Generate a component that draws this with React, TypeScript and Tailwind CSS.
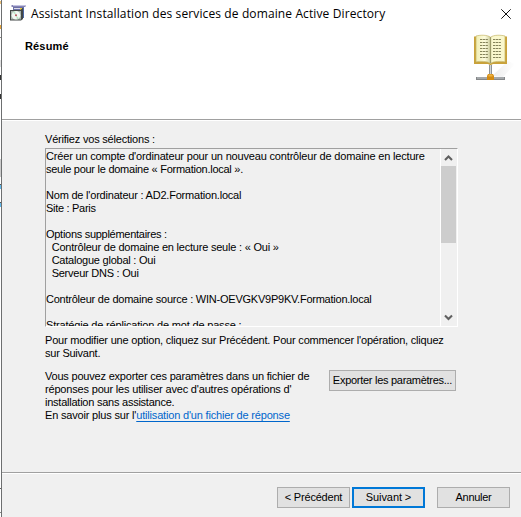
import React from "react";

const sans = "font-['Liberation_Sans',Arial,sans-serif]";

function InstallerIcon() {
  return (
    <svg width="17" height="16" viewBox="0 0 17 16" className="shrink-0">
      <path d="M1.500 0h14v2h-14z" fill="#8583b4" />
      <path d="M3 .5h12" stroke="#c4c4e2" />
      <path d="M3 2h11v5H3z" fill="#6c70a6" />
      <path d="M4 3h6v1H4z" fill="#dedcea" />
      <path d="M10 3h2.500v10H10z" fill="#f5d03f" />
      <path d="M12 3h2v10h-2z" fill="#4967a5" />
      <path d="M0 5h10l3-2v11l-2 1.500H0z" fill="#434746" />
      <path d="M1 6h10v8.500H1z" fill="#a8b5ae" />
      <circle cx="6" cy="10.300" r="4.300" fill="#f0f6f2" />
      <path d="M6 10.300 3 7.400l2-1.200zM6 10.300l3 3-2 1.200z" fill="#b9e5c3" />
      <circle cx="6" cy="10.300" r="1" fill="#b24d55" />
    </svg>
  );
}

function DirectoryIcon() {
  return (
    <svg width="42" height="48" viewBox="0 0 42 48">
      <defs>
        <linearGradient id="page" x1="0" x2="1">
          <stop offset="0" stopColor="#f0eeb4" />
          <stop offset=".6" stopColor="#fcfbdc" />
          <stop offset="1" stopColor="#cfd0a0" />
        </linearGradient>
        <linearGradient id="shade" x1="0" x2="1">
          <stop offset="0" stopColor="#d8d8d8" />
          <stop offset="1" stopColor="#ffffff" />
        </linearGradient>
      </defs>
      <path d="M18 42 34 27l7 3-12 13z" fill="url(#shade)" opacity=".5" />
      <path d="M0 2.500h2v25h11l3.500 2 3.500-2h11v-25h2V30H19l-2.500 1.200L14 30H0z" fill="#c9a23a" />
      <path d="M2 2C7 .8 13 .8 16.500 3.200v26C12.500 27.200 7 27 2 27.800z" fill="url(#page)" stroke="#c4b566" strokeWidth=".7" />
      <path d="M31 2C26 .8 20 .8 16.500 3.200v26c4-2 9.500-2.200 14.500-1.400z" fill="#faf8cd" stroke="#c4b566" strokeWidth=".7" />
      <path d="M16.500 3.200v26" stroke="#9b9a68" strokeWidth="1.300" />
      <g stroke="#85845b" strokeWidth="1" strokeDasharray="2.300 .5">
        <path d="M6 5.500h8M6 8.500h8M6 11.500h8M6 14.500h8M6 17.500h8M6 20.500h8M6 23.500h8" />
        <path d="M19 5.500h8M19 8.500h8M19 11.500h8M19 14.500h8M19 17.500h8M19 20.500h8M19 23.500h8" />
      </g>
      <path d="M15 31h3v9h-3z" fill="#8d9398" />
      <path d="M16 31h1v9h-1z" fill="#d1d5d7" />
      <path d="M2 43h29v3H2z" fill="#858789" />
      <path d="M3 44h27" stroke="#c4c9cc" />
      <path d="M14 40h5l1 2v4h-7v-4z" fill="#d38b14" />
      <path d="M14.500 40.500h4v2h-4z" fill="#edb342" />
    </svg>
  );
}

function Line({ children = "\u00a0", className = "" }: { children?: React.ReactNode; className?: string }) {
  return <div className={`h-[13px] whitespace-pre ${className}`}><span>{children}</span></div>;
}

function Button({ children, className = "" }: { children: React.ReactNode; className?: string }) {
  return (
    <button className={`flex h-[21px] shrink-0 items-center justify-center whitespace-pre bg-[#e1e1e1] leading-[13px] ${className}`}>
      {children}
    </button>
  );
}

function Arrow({ down = false }: { down?: boolean }) {
  return (
    <svg width="15" height="17" viewBox="0 0 15 17">
      <path d={down ? "M4 6.500 7.500 10 11 6.500" : "M4 11 7.500 7.500 11 11"} fill="none" stroke="#606060" strokeWidth="2.100" />
    </svg>
  );
}

export default function App() {
  return (
    <div className={`flex h-[517px] w-[521px] overflow-hidden bg-[#f0f0f0] text-[11px] leading-[13px] text-black ${sans}`}>
      <div className="flex w-px shrink-0 flex-col bg-white">
        <div className="mt-[1px] h-[3px] bg-[#eabf75]" />
        <div className="mt-[21px] h-[4px] bg-[#e4a33b]" />
        <div className="mt-[8px] h-px bg-[#888]" />
        <div className="mt-[22px] h-[7px] bg-[#e0e0e0]" />
        <div className="mt-[8px] h-[5px] bg-[#333]" />
        <div className="mt-[14px] h-[5px] bg-[#333]" />
        <div className="mt-[60px] h-[18px] bg-[#ccc]" />
        <div className="mt-[7px] h-px bg-[#555]" />
        <div className="h-[4px] bg-[#61b9ec]" />
        <div className="mt-[13px] h-px bg-[#555]" />
        <div className="h-[4px] bg-[#61b9ec]" />
        <div className="mt-[281px] h-px bg-[#666]" />
        <div className="mt-[23px] h-px bg-[#888]" />
      </div>
      <div className="w-px shrink-0 bg-[#6d6f70]" />
      <main className="flex w-[519px] shrink-0 flex-col">
        <header className="h-[119px] bg-white">
          <div className="flex h-[28px] items-center pl-2">
            <div className="mt-[-2px]"><InstallerIcon /></div>
            <h1 className="ml-1 whitespace-pre font-['Open_Sans',sans-serif] text-[12px] leading-[18px] tracking-[0.115px]">Assistant Installation des services de domaine Active Directory</h1>
            <svg className="ml-auto mr-[10px]" width="10" height="10" viewBox="0 0 10 10">
              <path d="m.3.3 9.400 9.400m0-9.400L.3 9.700" stroke="#111" />
            </svg>
          </div>
          <div className="flex justify-between pl-[23px] pr-[5px]">
            <h2 className="mt-[12px] text-[11px] font-bold leading-[13px] tracking-[0.15px]">Résumé</h2>
            <div className="mt-[6px]"><DirectoryIcon /></div>
          </div>
        </header>
        <div className="h-[2px] shrink-0 border-b border-white bg-[#a0a0a0]" />
        <section className="h-[351px] shrink-0 pl-[43px] pt-[12px]">
          <Line className="tracking-[-0.2px]">Vérifiez vos sélections :</Line>
          <div className="mt-[2px] flex h-[179px] w-[413px] overflow-hidden border border-b-white border-l-[#a0a0a0] border-r-white border-t-[#a0a0a0]">
            <div className="h-[177px] flex-1 overflow-hidden pt-px">
              <Line className="tracking-[-0.175px]">Créer un compte d'ordinateur pour un nouveau contrôleur de domaine en lecture</Line>
              <Line className="tracking-[-0.26px]">seule pour le domaine « Formation.local ».</Line>
              <Line />
              <Line className="tracking-[-0.21px]">Nom de l'ordinateur : AD2.Formation.local</Line>
              <Line className="tracking-[-0.3px]">Site : Paris</Line>
              <Line />
              <Line className="tracking-[-0.28px]">Options supplémentaires :</Line>
              <Line className="tracking-[-0.215px]">{"  Contrôleur de domaine en lecture seule : « Oui »"}</Line>
              <Line className="tracking-[-0.23px]">{"  Catalogue global : Oui"}</Line>
              <Line className="tracking-[-0.24px]">{"  Serveur DNS : Oui"}</Line>
              <Line />
              <Line className="tracking-[-0.235px]">Contrôleur de domaine source : WIN-OEVGKV9P9KV.Formation.local</Line>
              <Line />
              <Line className="tracking-[-0.18px]">Stratégie de réplication de mot de passe :</Line>
            </div>
            <div className="flex w-[17px] flex-col border-x border-l-white border-r-[#f0f0f0]">
              <Arrow />
              <div className="h-[77px] bg-[#cdcdcd]" />
              <div className="mt-auto"><Arrow down /></div>
            </div>
          </div>
          <div className="mt-[7px]">
            <Line className="tracking-[-0.2px]">Pour modifier une option, cliquez sur Précédent. Pour commencer l'opération, cliquez</Line>
            <Line className="tracking-[-0.24px]">sur Suivant.</Line>
          </div>
          <div className="mt-[10px] flex">
            <div className="w-[284px]">
              <Line className="tracking-[-0.2px]">Vous pouvez exporter ces paramètres dans un fichier de</Line>
              <Line className="tracking-[-0.18px]">réponses pour les utiliser avec d'autres opérations d'</Line>
              <Line className="tracking-[-0.24px]">installation sans assistance.</Line>
              <Line className="tracking-[-0.18px]">En savoir plus sur l'<a className="text-[#0066cc] underline underline-offset-2">utilisation d'un fichier de réponse</a></Line>
            </div>
            <Button className="w-[127px] border border-[#adadad] tracking-[-0.28px]">Exporter les paramètres...</Button>
          </div>
        </section>
        <div className="h-[2px] shrink-0 border-b border-white bg-[#a0a0a0]" />
        <footer className="flex pl-[275px] pt-[13px]">
          <Button className="w-[73px] border border-[#adadad] tracking-[-0.2px]">&lt; Précédent</Button>
          <Button className="ml-[2px] w-[73px] border-2 border-[#0078d7] tracking-[-0.1px]">Suivant &gt;</Button>
          <Button className="ml-[12px] w-[73px] border border-[#adadad] tracking-[-0.3px]">Annuler</Button>
        </footer>
      </main>
    </div>
  );
}
